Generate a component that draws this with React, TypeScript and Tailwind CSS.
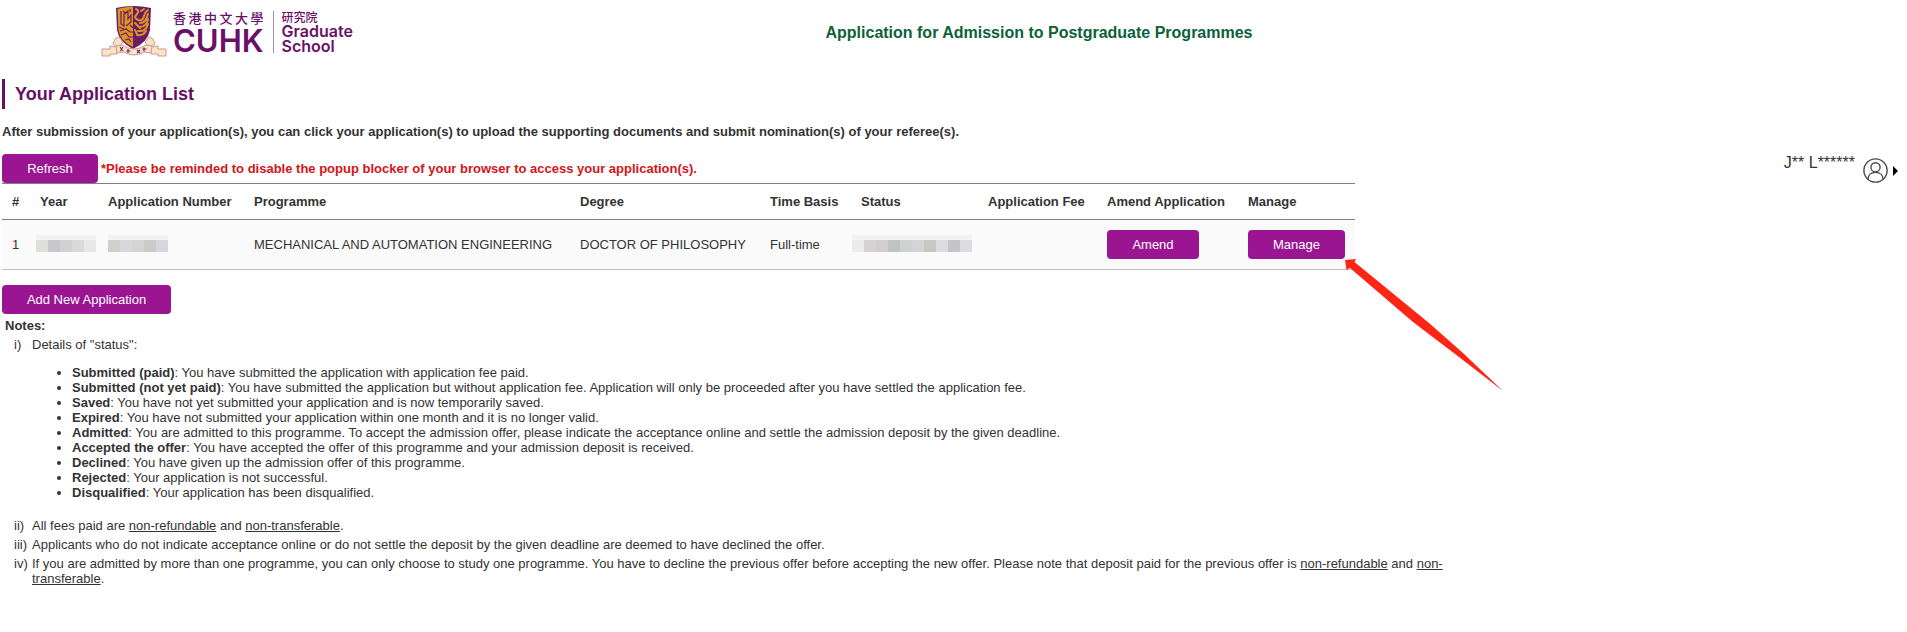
import type { ReactNode } from "react";

const buttonClass =
  "h-[29px] rounded-[4px] bg-[#9b1592] text-[13px] leading-[15px] text-white cursor-pointer hover:bg-[#7d1076]";

const columns = [
  { label: "#", width: "w-[28px]" },
  { label: "Year", width: "w-[68px]" },
  { label: "Application Number", width: "w-[146px]" },
  { label: "Programme", width: "w-[326px]" },
  { label: "Degree", width: "w-[190px]" },
  { label: "Time Basis", width: "w-[91px]" },
  { label: "Status", width: "w-[127px]" },
  { label: "Application Fee", width: "w-[119px]" },
  { label: "Amend Application", width: "w-[141px]" },
  { label: "Manage", width: "w-[117px]" },
];

const statuses = [
  ["Submitted (paid)", "You have submitted the application with application fee paid."],
  [
    "Submitted (not yet paid)",
    "You have submitted the application but without application fee. Application will only be proceeded after you have settled the application fee.",
  ],
  ["Saved", "You have not yet submitted your application and is now temporarily saved."],
  ["Expired", "You have not submitted your application within one month and it is no longer valid."],
  [
    "Admitted",
    "You are admitted to this programme. To accept the admission offer, please indicate the acceptance online and settle the admission deposit by the given deadline.",
  ],
  ["Accepted the offer", "You have accepted the offer of this programme and your admission deposit is received."],
  ["Declined", "You have given up the admission offer of this programme."],
  ["Rejected", "Your application is not successful."],
  ["Disqualified", "Your application has been disqualified."],
];

function Crest() {
  return (
    <svg className="h-[54px] w-[66px] shrink-0" viewBox="0 0 66 54" aria-hidden="true">
      <path d="M15 3Q32-1 50 3L49 25Q47 37 32 44Q18 37 16 25Z" fill="#6a1d66" />
      <path d="M16.500 4Q25 1.500 32 1.500V42Q19 36 17.500 25Z" fill="#dc9420" />
      <g fill="none" stroke="#6a1d66" strokeWidth="1.2">
        <path d="M20 6v13l3 2V9l4-3v8l3-4v7l-5 4M19 26l6-2 4 3h4M18 22l5 2M20 30l5-2 3 4h5M24 35l4-1 2 3" />
        <path d="M22 6l3 3M29 4v3M29 20l3 3" />
      </g>
      <g fill="none" stroke="#dc9420" strokeWidth="2" strokeLinecap="round">
        <path d="M35 4q4 2 1 5q-4 4 1 6q5 1 6-4q1-4 4-6M39 18q6 0 8-9M38 22q8 0 9-8M37 26q8 1 10-7M36 30q6 1 9-4" />
        <path d="M34 18l5 5M40 6l3-2M34 25l2 4" />
      </g>
      <g fill="#fbe3c4" stroke="#c79a94" strokeWidth="1">
        <path d="M14 34l4-2 4 5-4 5-6-3Z" />
        <path d="M52 34l-4-2-4 5 4 5 6-3Z" />
        <path d="M1 44h8v-3l7 1v7H9v2H1Z" />
        <path d="M65 44h-8v-3l-7 1v7h7v2h8Z" />
        <path d="M15 41l6-1 6 3 6 1 6-1 6-3 6 1-1 7-7-1-4 2-6 1-6-1-4-2-7 1Z" />
      </g>
      <path
        d="M19 42l3 4M22 42l-3 4M27 44v4M25.500 46h4M36 45l3 3M39 45l-3 3M43 42.500v4M41.500 44h4"
        fill="none"
        stroke="#6a1d66"
        strokeWidth="1.1"
      />
    </svg>
  );
}

function Logo() {
  return (
    <a href="#home" className="flex h-[54px] w-[252px] gap-[6px] text-[#6b0f68]" aria-label="CUHK Graduate School">
      <Crest />
      <span className="mt-[6px] flex h-[42px] flex-col border-r border-[#b48ab2] pr-[9px]">
        <span className="flex justify-between text-[13px] leading-[14px] font-medium font-['Noto_Sans_CJK_TC',sans-serif]">
          {"香港中文大學".split("").map((glyph) => (
            <span key={glyph}>{glyph}</span>
          ))}
        </span>
        <span className="text-[31px] leading-[32px] font-semibold font-[Inter,sans-serif]">CUHK</span>
      </span>
      <span className="mt-[5px] flex flex-col pl-[2px]">
        <span className="text-[12px] leading-[14px] font-medium font-['Noto_Sans_CJK_TC',sans-serif]">研究院</span>
        <span className="text-[16px] leading-[15px] font-semibold font-[Inter,sans-serif]">
          Graduate
          <br />
          School
        </span>
      </span>
    </a>
  );
}

function Redacted({ label, colors }: { label: string; colors: string[] }) {
  return (
    <span role="img" aria-label={label} className="flex pb-[2px]">
      {colors.map((color, i) => (
        <span
          key={i}
          className="h-[17px] w-[12px] border-t-[5px] border-[#f3f3f4]"
          style={{ backgroundColor: color }}
        />
      ))}
    </span>
  );
}

function UserMenu() {
  return (
    <button type="button" className="flex items-start gap-[8px] text-[#333]" aria-label="User menu">
      <span className="text-[16px] leading-[18px]">J** L******</span>
      <span className="flex items-center gap-[5px] pt-[4px]">
        <svg className="size-[25px]" viewBox="0 0 25 25" fill="none" stroke="#4a4a4a" strokeWidth="1.4" aria-hidden="true">
          <circle cx="12.5" cy="12.5" r="11.6" />
          <circle cx="12.5" cy="9.3" r="4.6" />
          <path d="M5 21.3C5 17 8 14.4 12.5 14.4S20 17 20 21.3" />
        </svg>
        <svg className="h-[10px] w-[5px]" viewBox="0 0 5 10" aria-hidden="true">
          <path d="M0 0L5 5L0 10Z" fill="#000" />
        </svg>
      </span>
    </button>
  );
}

function Note({ marker, children }: { marker: string; children: ReactNode }) {
  return (
    <li className="flex">
      <span className="w-[18px] shrink-0 whitespace-nowrap">{marker}</span>
      <div>{children}</div>
    </li>
  );
}

export default function App() {
  return (
    <div className="min-h-screen bg-white text-[13px] leading-[15px] text-[#333] font-['Liberation_Sans',Arial,sans-serif]">
      <header className="flex items-start pt-[5px] pl-[101px]">
        <Logo />
        <div className="flex-1 pt-[19px] pr-[182px] text-center text-[16px] leading-[18px] font-bold text-[#0b6138]">
          Application for Admission to Postgraduate Programmes
        </div>
      </header>

      <main className="px-[2px] pt-[20px]">
        <h1 className="border-l-[3px] border-[#660f66] pl-[10px] text-[18px] leading-[30px] font-bold text-[#660f66]">
          Your Application List
        </h1>
        <p className="mt-[15px] font-bold">
          After submission of your application(s), you can click your application(s) to upload the supporting documents
          and submit nomination(s) of your referee(s).
        </p>

        <div className="mt-[15px] flex items-start justify-between pr-[7px]">
          <div>
            <div className="flex items-center gap-[3px]">
              <button type="button" className={`${buttonClass} w-[96px]`}>
                Refresh
              </button>
              <p className="font-bold text-[#d4141a]">
                *Please be reminded to disable the popup blocker of your browser to access your application(s).
              </p>
            </div>

            <div className="relative">
              <table className="w-[1353px] table-fixed border-separate border-spacing-0 text-left">
                <thead>
                  <tr className="h-[37px]">
                    {columns.map((column) => (
                      <th
                        key={column.label}
                        className={`${column.width} border-y border-[#808080] pl-[10px] font-bold whitespace-nowrap`}
                      >
                        {column.label}
                      </th>
                    ))}
                  </tr>
                </thead>
                <tbody>
                  <tr className="h-[50px] bg-[#fafafa] *:border-b *:border-[#c0c0c0]">
                    <td className="pl-[10px]">1</td>
                    <td className="pl-[6px]">
                      <Redacted label="Year hidden" colors={["#e0dfdb", "#c8c8ca", "#d1d2d4", "#dadada", "#e6e8ea"]} />
                    </td>
                    <td className="pl-[10px]">
                      <Redacted
                        label="Application number hidden"
                        colors={["#d1cfca", "#d7d8da", "#d5d5d5", "#cccac8", "#d6d7dc"]}
                      />
                    </td>
                    <td className="pl-[10px] whitespace-nowrap">MECHANICAL AND AUTOMATION ENGINEERING</td>
                    <td className="pl-[10px] whitespace-nowrap">DOCTOR OF PHILOSOPHY</td>
                    <td className="pl-[10px]">Full-time</td>
                    <td className="pl-[1px]">
                      <Redacted
                        label="Status hidden"
                        colors={[
                          "#ececec",
                          "#d4d2d4",
                          "#d0cfce",
                          "#bec3c4",
                          "#d0d2d2",
                          "#d2d6d6",
                          "#c8c7c0",
                          "#dddce0",
                          "#c4c5c6",
                          "#dcdce0",
                        ]}
                      />
                    </td>
                    <td />
                    <td className="pl-[10px]">
                      <button type="button" className={`${buttonClass} w-[92px]`}>
                        Amend
                      </button>
                    </td>
                    <td className="pl-[10px]">
                      <button type="button" className={`${buttonClass} w-[97px]`}>
                        Manage
                      </button>
                    </td>
                  </tr>
                </tbody>
              </table>
              <svg
                className="pointer-events-none absolute top-[76px] left-[1343px] h-[133px] w-[158px]"
                viewBox="0 0 158 133"
                aria-hidden="true"
              >
                <path d="M0 1L11 0L9.500 3L84 64L118 94L158 132L114 98L68 63L5 9L1.500 11Z" fill="#ff2516" />
              </svg>
            </div>
          </div>
          <UserMenu />
        </div>

        <button type="button" className={`${buttonClass} mt-[15px] block w-[169px]`}>
          Add New Application
        </button>

        <section className="max-w-[1482px] pt-[4px] pl-[3px]" aria-labelledby="notes-title">
          <h2 id="notes-title" className="font-bold">
            Notes:
          </h2>
          <ol className="mt-[4px] flex flex-col gap-[4px] pl-[9px]">
            <Note marker="i)">
              Details of "status":
              <ul className="mt-[13px] mb-[14px] list-disc pl-[40px]">
                {statuses.map(([name, text]) => (
                  <li key={name}>
                    <b>{name}</b>: {text}
                  </li>
                ))}
              </ul>
            </Note>
            <Note marker="ii)">
              All fees paid are <u>non-refundable</u> and <u>non-transferable</u>.
            </Note>
            <Note marker="iii)">
              Applicants who do not indicate acceptance online or do not settle the deposit by the given deadline are
              deemed to have declined the offer.
            </Note>
            <Note marker="iv)">
              If you are admitted by more than one programme, you can only choose to study one programme. You have to
              decline the previous offer before accepting the new offer. Please note that deposit paid for the previous
              offer is <u>non-refundable</u> and <u>non-transferable</u>.
            </Note>
          </ol>
        </section>
      </main>
    </div>
  );
}
